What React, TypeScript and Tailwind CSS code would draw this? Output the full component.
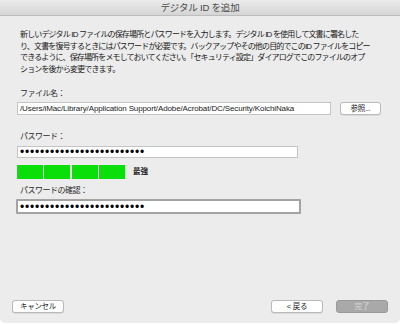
import React from 'react'

const jp = { fontFamily: '"Liberation Sans", "Noto Sans CJK JP", sans-serif' }

const dots = '•'.repeat(25)

const Label = ({ children }: { children: React.ReactNode }) => (
  <div className="pl-[3px] text-[8px] leading-[11px] tracking-[-0.5px] text-[#2a2a2a]">{children}</div>
)

const Btn = ({ children, className = '' }: { children: React.ReactNode; className?: string }) => (
  <div
    className={
      'flex h-[13px] items-center justify-center rounded-[3px] border border-[#b9b9b9] bg-white text-[7.5px] leading-none tracking-[-0.3px] text-[#222] shadow-[0_0.5px_0.5px_rgba(0,0,0,0.15)] ' +
      className
    }
  >
    {children}
  </div>
)

export default function App() {
  return (
    <div className="h-[324px] w-[400px] bg-white" style={jp}>
      <div className="flex h-[323px] w-[400px] flex-col overflow-hidden rounded-b-[5px] bg-[#ececec]">
        {/* title bar */}
        <div className="flex h-[16px] items-center justify-center border-b border-[#bdbdbd] bg-gradient-to-b from-[#ebebeb] to-[#d5d5d5] text-[9.5px] leading-none tracking-[-0.2px] text-[#4a4a4a]">
          デジタル ID を追加
        </div>

        <div className="flex flex-col px-[17px]">
          <div className="mt-[13px] whitespace-nowrap pl-[3px] text-[8px] leading-[11.5px] tracking-[-0.85px] text-[#1a1a1a]">
            <div>新しいデジタル ID ファイルの保存場所とパスワードを入力します。デジタル ID を使用して文書に署名した</div>
            <div>り、文書を復号するときにはパスワードが必要です。バックアップやその他の目的でこのID ファイルをコピー</div>
            <div>できるように、保存場所をメモしておいてください。「セキュリティ設定」ダイアログでこのファイルのオプ</div>
            <div>ションを後から変更できます。</div>
          </div>

          <div className="mt-[13px]">
            <Label>ファイル名：</Label>
          </div>
          <div className="mt-[3px] flex items-center gap-[9px]">
            <div className="flex h-[13px] w-[314px] items-center overflow-hidden whitespace-nowrap border border-[#c4c4c4] bg-white px-[2px] text-[8px] leading-none tracking-[-0.12px] text-[#222]">
              /Users/iMac/Library/Application Support/Adobe/Acrobat/DC/Security/KoichiNaka
            </div>
            <Btn className="w-[41px]">参照...</Btn>
          </div>

          <div className="mt-[16px]">
            <Label>パスワード：</Label>
          </div>
          <div className="mt-[4px] flex h-[12px] w-[281px] items-center overflow-hidden border border-[#c4c4c4] bg-white px-[2px] text-[12px] leading-none tracking-[0.8px] text-black">
            {dots}
          </div>

          <div className="mt-[7px] flex items-center">
            <div className="flex h-[14px] w-[108px] gap-[1.5px]">
              <div className="flex-1 bg-[#0adf0a]" />
              <div className="flex-1 bg-[#0adf0a]" />
              <div className="flex-1 bg-[#0adf0a]" />
              <div className="flex-1 bg-[#0adf0a]" />
            </div>
            <span className="ml-[8px] text-[7.5px] font-bold leading-none text-[#222]">最強</span>
          </div>

          <div className="mt-[6px]">
            <Label>パスワードの確認：</Label>
          </div>
          <div className="mt-[3px] ml-[-1px] flex h-[15px] w-[285px] items-center overflow-hidden rounded-[1px] border-[2px] border-[#a3a3a3] bg-white px-[2px] text-[12px] leading-none tracking-[0.8px] text-black">
            {dots}
          </div>
        </div>

        <div className="mt-auto mb-[10px] flex items-center px-[12px]">
          <Btn className="w-[52px]">キャンセル</Btn>
          <div className="flex-1" />
          <Btn className="w-[52px]">&lt; 戻る</Btn>
          <div className="ml-[13px] flex h-[13px] w-[52px] items-center justify-center rounded-[3px] border border-[#9a9a9a] bg-[#a9a9a9] text-[7.5px] leading-none text-[#d9d9d9]">
            完了
          </div>
        </div>
      </div>
    </div>
  )
}
